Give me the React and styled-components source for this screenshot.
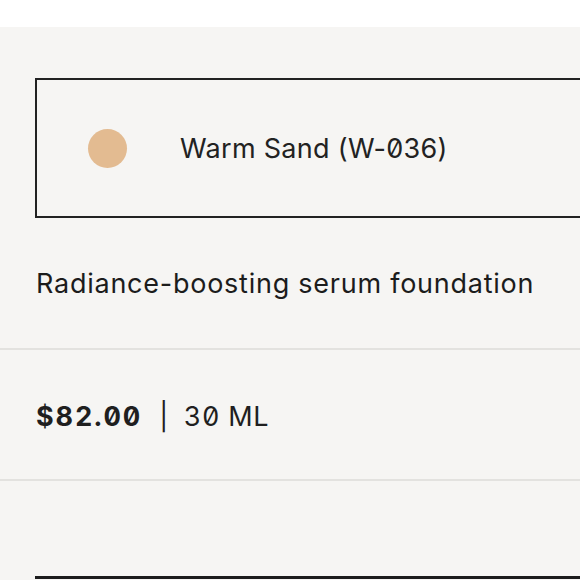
import React from 'react';
import styled, { createGlobalStyle } from 'styled-components';

const Global = createGlobalStyle`
  html, body {
    margin: 0;
    padding: 0;
    background: #ffffff;
    overflow: hidden;
  }
  body {
    font-family: Inter, "Liberation Sans", sans-serif;
    color: #1f1f1f;
    font-feature-settings: "zero" 1;
  }
`;

const Page = styled.div`
  margin-top: 27px;
  background: #f6f5f3;
  width: 580px;
  height: 553px;
  overflow: hidden;
`;

const Inset = styled.div`
  padding: ${({ top }) => top || 0}px 0 0 35px;
`;

const ShadeBox = styled.div`
  width: 620px;
  height: 140px;
  border: 2px solid #222;
  display: flex;
  align-items: center;
  gap: 53px;
  padding-left: 51px;
  box-sizing: border-box;
`;

const Swatch = styled.span`
  width: 39px;
  height: 39px;
  border-radius: 50%;
  background: ${({ color }) => color};
  flex: none;
`;

const ShadeName = styled.span`
  font-size: 27px;
  letter-spacing: 0.3px;
  color: #222;
`;

const Description = styled.p`
  margin: 0;
  padding: 50px 0 48px 36px;
  font-size: 27px;
  letter-spacing: 0.75px;
  line-height: 32px;
  color: #1c1c1c;
  border-bottom: 2px solid #e3e2df;
`;

const PriceRow = styled.div`
  display: flex;
  align-items: center;
  padding: 51px 0 46px 36px;
  font-size: 27px;
  line-height: 32px;
  letter-spacing: 0.7px;
  border-bottom: 2px solid #e3e2df;
  font-variant-numeric: tabular-nums;
`;

const Price = styled.span`
  font-weight: 700;
  letter-spacing: 1.9px;
`;

const Sep = styled.span`
  margin: 0 15px 0 17px;
`;

const NextBox = styled.div`
  margin: 95px 0 0 35px;
  width: 620px;
  height: 40px;
  border-top: 3px solid #1c1c1c;
`;

export default function App() {
  return (
    <>
      <Global />
      <Page>
        <Inset top={51}>
          <ShadeBox>
            <Swatch color="#e3bb91" />
            <ShadeName>Warm Sand (W-036)</ShadeName>
          </ShadeBox>
        </Inset>
        <Description>Radiance-boosting serum foundation</Description>
        <PriceRow>
          <Price>$82.00</Price>
          <Sep>|</Sep>
          <span>30 ML</span>
        </PriceRow>
        <NextBox />
      </Page>
    </>
  );
}
